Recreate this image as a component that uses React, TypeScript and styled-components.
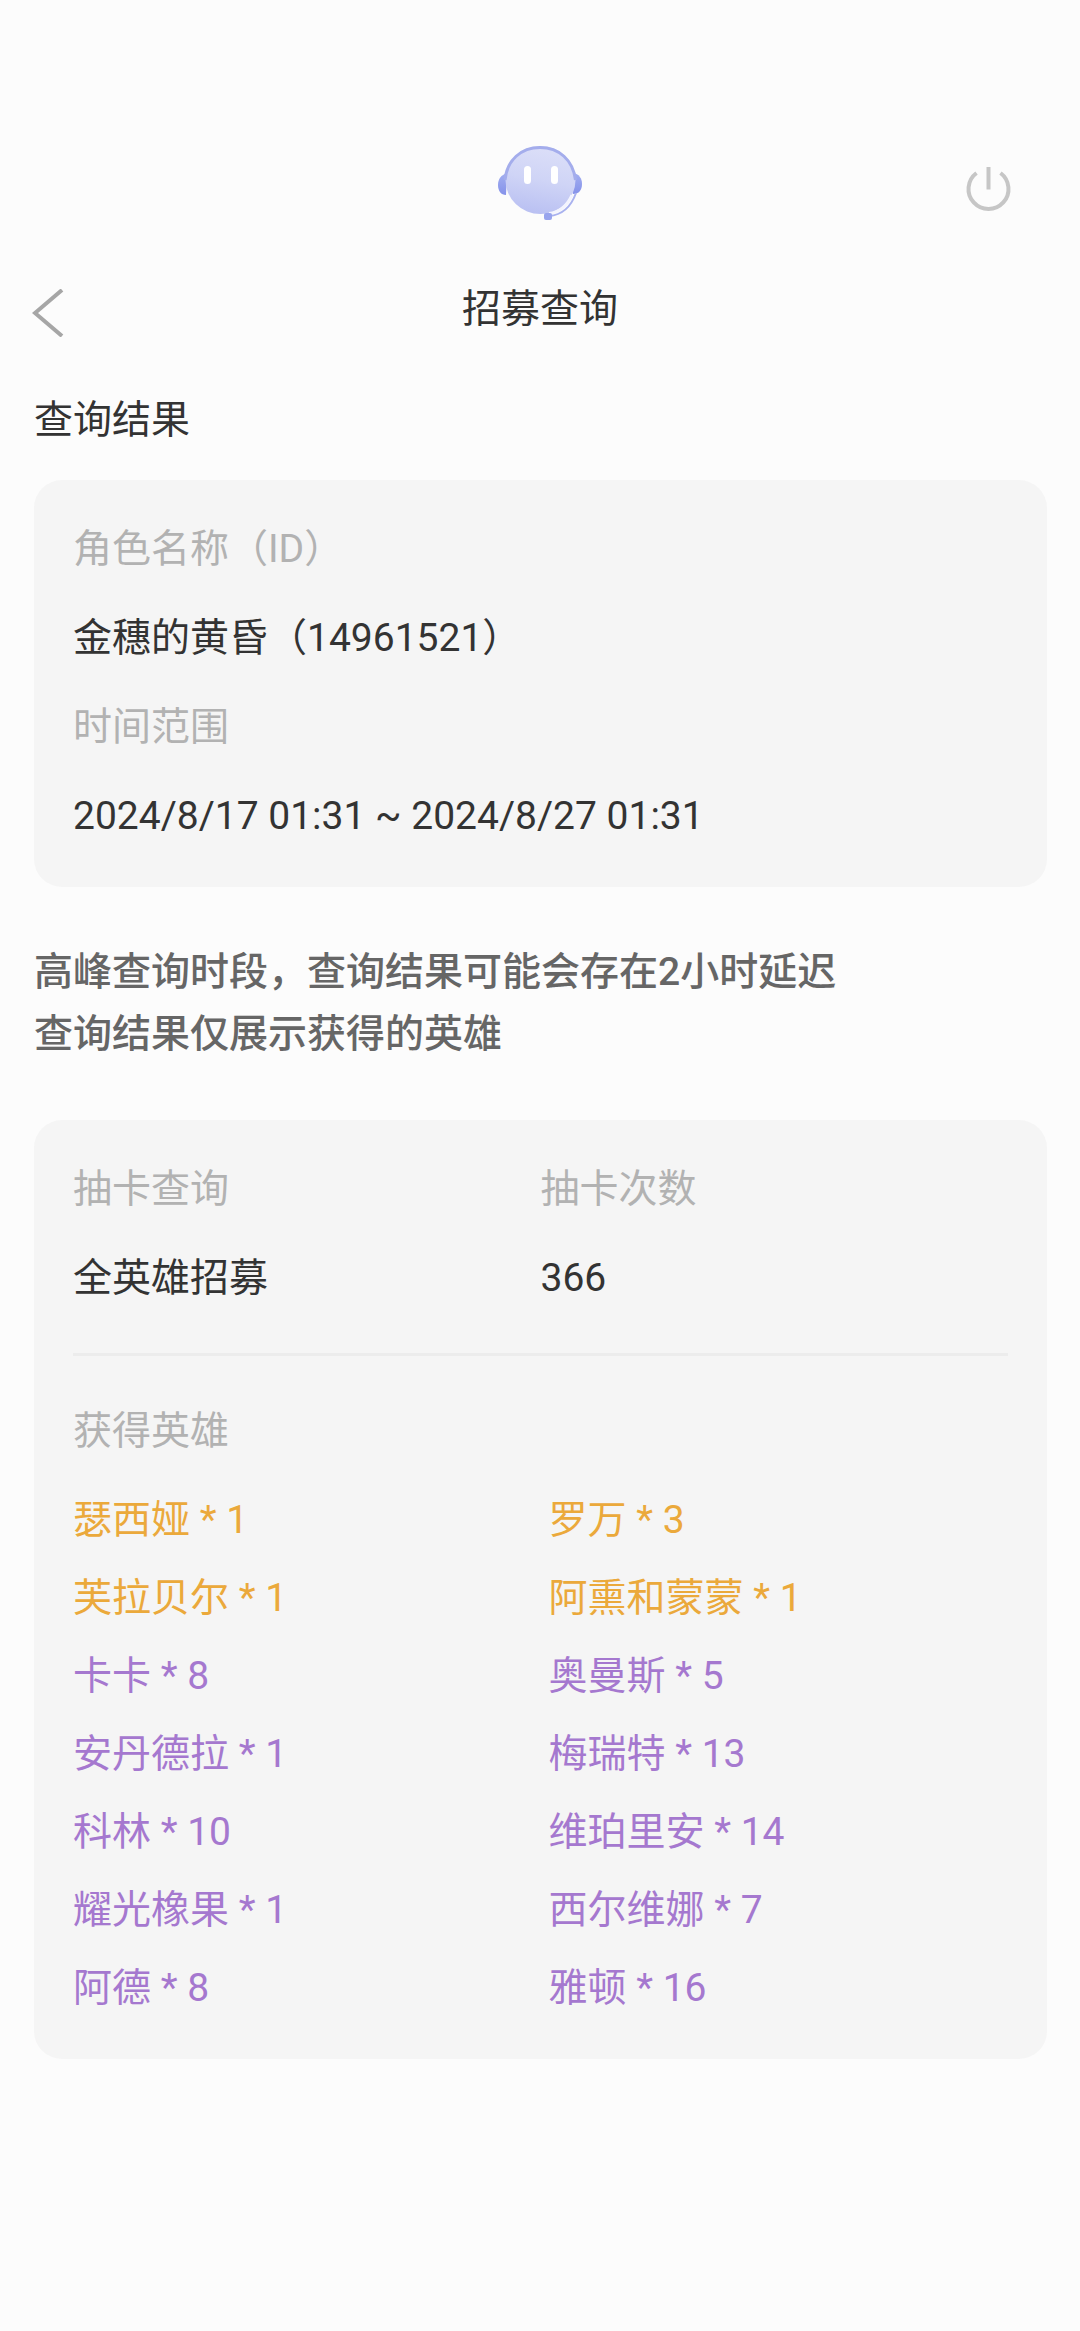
import React from "react";
import styled, { createGlobalStyle } from "styled-components";

const GlobalStyle = createGlobalStyle`
  * { box-sizing: border-box; }
  body {
    margin: 0;
    background: #fcfcfc;
    color: #333333;
    font-family: Roboto, "Noto Sans CJK SC", sans-serif;
    font-size: 39px;
    line-height: 50px;
  }
`;

const Page = styled.main`
  padding-bottom: 60px;
`;

const TopBar = styled.header`
  display: grid;
  grid-template-columns: 1fr auto 1fr;
  align-items: end;
  padding: 130px 40px 0;
`;

const IconButton = styled.button`
  display: flex;
  justify-self: ${(p: { $side: "start" | "end" }) => p.$side};
  padding: 0;
  border: 0;
  background: none;
  cursor: pointer;
`;

const BotIcon = styled.svg`
  grid-column: 2;
  display: block;
  width: 120px;
  height: 100px;
`;

const PowerIcon = styled.svg`
  width: 100px;
  height: 90px;
`;

const BackIcon = styled.svg`
  width: 32px;
  height: 48px;
`;

const TitleBar = styled.div`
  display: grid;
  grid-template-columns: 1fr auto 1fr;
  align-items: end;
  padding: 54px 32px 0;
`;

const Title = styled.h1`
  margin: 0;
  padding-bottom: 3px;
  font-size: 39px;
  line-height: 50px;
  font-weight: 400;
`;

const Content = styled.div`
  padding: 0 33px 0 34px;
`;

const SectionTitle = styled.h2`
  margin: 0;
  padding: 58px 0 35px;
  font-size: 39px;
  line-height: 50px;
  font-weight: 400;
`;

const Card = styled.section`
  padding: 44px 39px 46px;
  border-radius: 28px;
  background: #f5f5f5;
`;

const Fields = styled.dl`
  display: grid;
  grid-template-columns: ${(p: { $columns: number }) => `repeat(${p.$columns}, 1fr)`};
  row-gap: 39px;
  margin: 0;
`;

const Field = styled.div`
  display: grid;
  row-gap: 39px;
`;

const Label = styled.dt`
  color: #b2b2b2;
`;

const Value = styled.dd`
  margin: 0;
`;

const Notice = styled.p`
  margin: 54px 0 55px;
  color: #666666;
  font-weight: 500;
  line-height: 62px;
`;

const Divider = styled.hr`
  height: 3px;
  margin: 50px 0;
  border: 0;
  background: #ececec;
`;

const HeroHeading = styled.h3`
  margin: 0 0 39px;
  color: #b2b2b2;
  font-size: 39px;
  font-weight: 400;
`;

const HeroList = styled.ul`
  display: grid;
  grid-template-columns: 1fr 1fr;
  gap: 28px 16px;
  margin: 0;
  padding: 0;
  list-style: none;
`;

type Rarity = "gold" | "purple";
const rarityColor: Record<Rarity, string> = { gold: "#eba93b", purple: "#a578cf" };

const Hero = styled.li`
  color: ${(p: { $rarity: Rarity }) => rarityColor[p.$rarity]};
`;

const heroes: { name: string; count: number; rarity: Rarity }[] = [
  { name: "瑟西娅", count: 1, rarity: "gold" },
  { name: "罗万", count: 3, rarity: "gold" },
  { name: "芙拉贝尔", count: 1, rarity: "gold" },
  { name: "阿熏和蒙蒙", count: 1, rarity: "gold" },
  { name: "卡卡", count: 8, rarity: "purple" },
  { name: "奥曼斯", count: 5, rarity: "purple" },
  { name: "安丹德拉", count: 1, rarity: "purple" },
  { name: "梅瑞特", count: 13, rarity: "purple" },
  { name: "科林", count: 10, rarity: "purple" },
  { name: "维珀里安", count: 14, rarity: "purple" },
  { name: "耀光橡果", count: 1, rarity: "purple" },
  { name: "西尔维娜", count: 7, rarity: "purple" },
  { name: "阿德", count: 8, rarity: "purple" },
  { name: "雅顿", count: 16, rarity: "purple" },
];

function Bot() {
  return (
    <BotIcon viewBox="0 0 120 100" aria-hidden="true">
      <defs>
        <linearGradient id="face" x1="0.6" y1="0" x2="0.4" y2="1">
          <stop offset="0" stopColor="#dcdff8" />
          <stop offset="0.5" stopColor="#cfd4f6" />
          <stop offset="1" stopColor="#b9c0f2" />
        </linearGradient>
        <linearGradient id="ear" x1="0" y1="0" x2="0" y2="1">
          <stop offset="0" stopColor="#a3aff0" />
          <stop offset="1" stopColor="#8592ea" />
        </linearGradient>
      </defs>
      <path d="M27 43C21 45 18 49 18 55s3 10 8 10z" fill="url(#ear)" />
      <path d="M93 43c6 1 9 5 9 11s-3 10-9 10z" fill="url(#ear)" />
      <ellipse cx="60.500" cy="50" rx="35" ry="34" fill="url(#face)" />
      <path d="M25 50C27 30 41 17.500 60 17.500s33 12.500 35.500 32.500" fill="none" stroke="#a4adec" strokeWidth="3" />
      <path d="M92 65C87 76 80 82 69 83.500" fill="none" stroke="#f3f4fe" strokeWidth="3" />
      <path d="M96 63C91 77 82 85 69 86" fill="none" stroke="#a9b2ef" strokeWidth="2" />
      <rect x="64" y="83" width="8" height="7" rx="2" fill="#98a4ed" />
      <rect x="44" y="36" width="7" height="18" rx="3.500" fill="#ffffff" />
      <rect x="71" y="36" width="7" height="18" rx="3.500" fill="#ffffff" />
    </BotIcon>
  );
}

export default function App() {
  return (
    <>
      <GlobalStyle />
      <Page lang="zh-CN">
        <TopBar>
          <Bot />
          <IconButton $side="end" type="button" aria-label="退出">
            <PowerIcon viewBox="0 0 100 90" fill="none" stroke="#c6c6c6" strokeWidth="4">
              <path d="M36.500 33A20 20 0 1 0 60.500 33M48.500 27V49.500" />
            </PowerIcon>
          </IconButton>
        </TopBar>
        <TitleBar>
          <IconButton $side="start" type="button" aria-label="返回">
            <BackIcon viewBox="0 0 32 48" fill="none" stroke="#a6a6a6" strokeWidth="4">
              <path d="M30 1L3 24L30 47" />
            </BackIcon>
          </IconButton>
          <Title>招募查询</Title>
        </TitleBar>
        <Content>
          <SectionTitle>查询结果</SectionTitle>
          <Card>
            <Fields $columns={1}>
              <Field>
                <Label>角色名称（ID）</Label>
                <Value>金穗的黄昏（14961521）</Value>
              </Field>
              <Field>
                <Label>时间范围</Label>
                <Value>2024/8/17 01:31 ~ 2024/8/27 01:31</Value>
              </Field>
            </Fields>
          </Card>
          <Notice>
            高峰查询时段，查询结果可能会存在2小时延迟
            <br />
            查询结果仅展示获得的英雄
          </Notice>
          <Card>
            <Fields $columns={2}>
              <Field>
                <Label>抽卡查询</Label>
                <Value>全英雄招募</Value>
              </Field>
              <Field>
                <Label>抽卡次数</Label>
                <Value>366</Value>
              </Field>
            </Fields>
            <Divider />
            <HeroHeading>获得英雄</HeroHeading>
            <HeroList>
              {heroes.map((hero) => (
                <Hero key={hero.name} $rarity={hero.rarity}>
                  {`${hero.name} * ${hero.count}`}
                </Hero>
              ))}
            </HeroList>
          </Card>
        </Content>
      </Page>
    </>
  );
}
